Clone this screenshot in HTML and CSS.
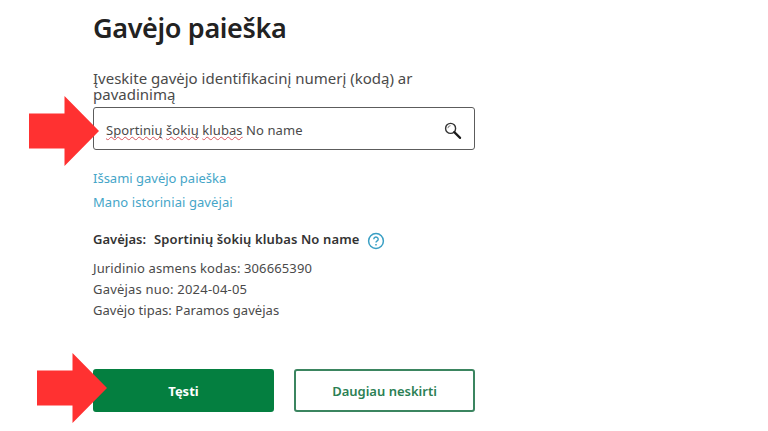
FILE: index.html
```html
<!DOCTYPE html>
<html lang="lt">
<head>
  <meta charset="UTF-8" />
  <title>Gavėjo paieška</title>
  <meta name="viewport" content="width=device-width, initial-scale=1.0" />
  <link rel="stylesheet" href="styles.css">
</head>
<body>
  <main class="search-page">
    <h1>Gavėjo paieška</h1>

    <div class="field-label">
      Įveskite gavėjo identifikacinį numerį (kodą) ar<br>
      pavadinimą
    </div>
    <div class="search-box">
      <div class="search-value"><span class="typo">Sportinių</span> <span class="typo">šokių</span> <span class="typo">klubas</span> No name</div>
      <svg class="search-icon" width="18" height="18" viewBox="0 0 18 18" fill="none">
        <circle cx="6.6" cy="6.4" r="5" stroke="#333" stroke-width="1.4" />
        <path d="M3.9 6.2a2.7 2.7 0 0 1 2.6-2.5" stroke="#777" stroke-width="1" />
        <path d="M10.3 10.1l5.8 5.8" stroke="#1c1c1c" stroke-width="2.2" stroke-linecap="round" />
      </svg>
      <svg class="arrow" width="71" height="70" viewBox="0 0 71 70">
        <path d="M0 17.5h35.5V0L70 35 35.5 70V52.5H0z" fill="#ff3131" />
      </svg>
    </div>

    <nav class="links">
      <a href="#">Išsami gavėjo paieška</a>
      <a href="#" class="link-history">Mano istoriniai gavėjai</a>
    </nav>

    <div class="recipient">
      <strong>Gavėjas:</strong>
      <strong class="recipient-name">Sportinių šokių klubas No name</strong>
      <svg class="help-icon" width="18" height="18" viewBox="0 0 18 18" fill="none" stroke="#3a9fc4">
        <circle cx="9" cy="9" r="7.4" stroke-width="1.5" />
        <path d="M6.8 7.2a2.2 2.1 0 1 1 3.4 1.7c-.8.5-1.2.8-1.2 1.7" stroke-width="1.4" />
        <path d="M9 11.9v1.5" stroke-width="1.5" />
      </svg>
    </div>
    <div class="details">
      <p>Juridinio asmens kodas: 306665390</p>
      <p class="detail-since">Gavėjas nuo: 2024-04-05</p>
      <p class="detail-type">Gavėjo tipas: Paramos gavėjas</p>
    </div>

    <div class="actions">
      <button class="btn btn-primary">Tęsti</button>
      <button class="btn btn-secondary">Daugiau neskirti</button>
      <svg class="arrow" width="71" height="70" viewBox="0 0 71 70">
        <path d="M0 17.5h35.5V0L70 35 35.5 70V52.5H0z" fill="#ff3131" />
      </svg>
    </div>
  </main>
</body>
</html>
```
FILE: styles.css
```css
body {
  margin: 0;
  background: #fff;
  color: #4a4a4a;
  font-family: 'Noto Sans', 'Open Sans', sans-serif;
  font-size: 13px;
}

.search-page {
  box-sizing: border-box;
  width: 382px;
  min-height: 431px;
  margin-left: 93px;
  padding-top: 8px;
}

h1 {
  margin: 0;
  font-size: 27px;
  line-height: 40px;
  font-weight: 600;
  letter-spacing: -0.35px;
  color: #222;
}

.field-label {
  margin-top: 22px;
  font-size: 15px;
  line-height: 16px;
  white-space: nowrap;
}

.search-box {
  position: relative;
  display: flex;
  align-items: center;
  justify-content: space-between;
  box-sizing: border-box;
  height: 43px;
  margin-top: 5px;
  padding: 0 12px;
  border: 1.5px solid #5c5c5c;
  border-radius: 3px;
}

.search-value {
  padding-top: 2px;
  letter-spacing: 0.08px;
}

.typo {
  text-decoration: underline wavy #d9545c 1px;
  text-underline-offset: 1px;
  text-decoration-skip-ink: none;
}

.search-icon {
  margin-top: 4px;
}

.arrow {
  position: absolute;
}

.search-box .arrow {
  left: -65px;
  top: -12px;
}

.links {
  display: flex;
  flex-direction: column;
  align-items: flex-start;
  margin-top: 16px;
  line-height: 24px;
}

.links a {
  color: #45a5c8;
  text-decoration: none;
}

.link-history {
  letter-spacing: 0.08px;
}

.recipient {
  display: flex;
  align-items: center;
  height: 20px;
  margin-top: 15px;
  color: #333;
  white-space: nowrap;
}

.recipient strong {
  font-weight: 600;
}

.recipient-name {
  margin-left: 8px;
  letter-spacing: 0.12px;
}

.help-icon {
  margin: 3px 0 0 8px;
}

.details {
  margin-top: 9px;
  line-height: 21px;
  letter-spacing: 0.12px;
}

.details p {
  margin: 0;
}

.detail-since {
  letter-spacing: 0.2px;
}

.detail-type {
  letter-spacing: 0.04px;
}

.actions {
  position: relative;
  display: flex;
  justify-content: space-between;
  margin-top: 48px;
}

.actions .arrow {
  left: -56px;
  top: -16px;
}

.btn {
  box-sizing: border-box;
  width: 181px;
  height: 43px;
  padding: 0;
  border: 2px solid #047f40;
  border-radius: 3px;
  font: 600 13px 'Noto Sans', 'Open Sans', sans-serif;
}

.btn-primary {
  background: #047f40;
  color: #fff;
  font-weight: 700;
}

.btn-secondary {
  background: #fff;
  border-color: #3b8560;
  color: #2b7f54;
}
```
